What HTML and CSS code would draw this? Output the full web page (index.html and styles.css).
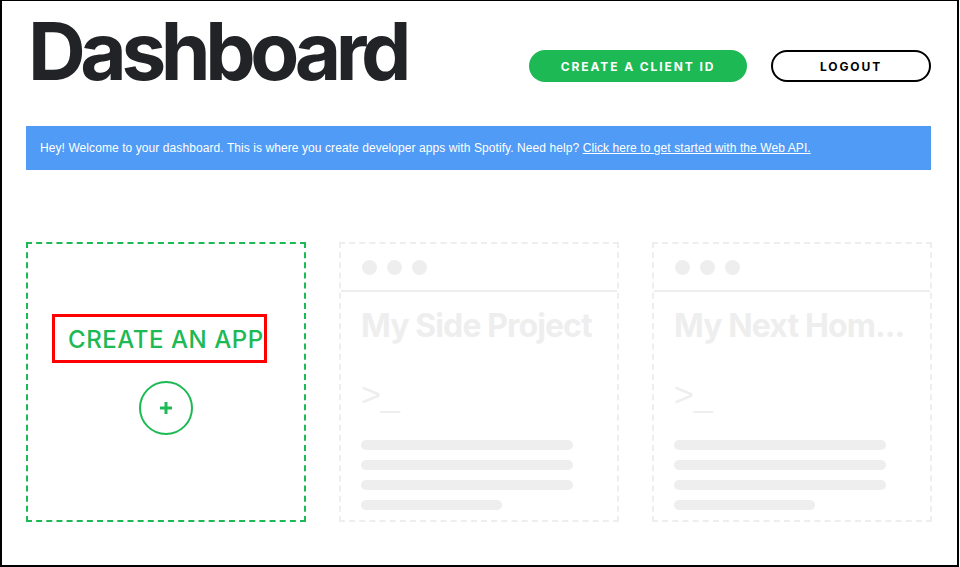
FILE: index.html
```html
<!DOCTYPE html>
<html lang="en">
<head>
<meta charset="utf-8">
<title>Dashboard</title>
<link rel="stylesheet" href="styles.css">
</head>
<body>
<div class="frame">
  <div class="container">
    <header class="header">
      <h1 class="title">Dashboard</h1>
      <div class="actions">
        <a class="btn btn-green" href="#">Create a client id</a>
        <a class="btn btn-outline" href="#">Logout</a>
      </div>
    </header>

    <div class="banner">
      Hey! Welcome to your dashboard. This is where you create developer apps with Spotify. Need help? <a href="#" class="banner-link">Click here to get started with the Web API.</a>
    </div>

    <div class="cards">
      <div class="card card-create">
        <h2 class="create-title">CREATE AN APP</h2>
        <div class="plus-circle">
          <svg width="14" height="14" viewBox="0 0 14 14"><path d="M7 1v12M1 7h12" stroke="#1db954" stroke-width="3" fill="none"/></svg>
        </div>
      </div>

      <div class="card card-ghost">
        <div class="ghost-bar">
          <span class="dot"></span><span class="dot"></span><span class="dot"></span>
        </div>
        <div class="ghost-body">
          <div class="ghost-title">My Side Project</div>
          <div class="ghost-prompt">&gt;_</div>
          <div class="ghost-lines">
            <span class="line"></span>
            <span class="line"></span>
            <span class="line"></span>
            <span class="line line-short"></span>
          </div>
        </div>
      </div>

      <div class="card card-ghost">
        <div class="ghost-bar">
          <span class="dot"></span><span class="dot"></span><span class="dot"></span>
        </div>
        <div class="ghost-body">
          <div class="ghost-title">My Next Hom...</div>
          <div class="ghost-prompt">&gt;_</div>
          <div class="ghost-lines">
            <span class="line"></span>
            <span class="line"></span>
            <span class="line"></span>
            <span class="line line-short"></span>
          </div>
        </div>
      </div>
    </div>
  </div>
</div>
</body>
</html>
```

FILE: styles.css
```css
* { box-sizing: border-box; }

html, body {
  margin: 0;
  padding: 0;
  background: #ffffff;
}

.frame {
  width: 959px;
  height: 567px;
  border-top: 1px solid #000;
  border-left: 2px solid #000;
  border-right: 2px solid #000;
  border-bottom: 2px solid #000;
  overflow: hidden;
  font-family: Inter, "Liberation Sans", sans-serif;
}

.container {
  margin-left: 24px;
  width: 906px;
  padding-top: 10px;
}

.header {
  display: flex;
  justify-content: space-between;
  align-items: flex-start;
}

.title {
  margin: 0 0 0 2px;
  font-family: Inter, sans-serif;
  font-weight: 700;
  font-size: 80px;
  line-height: 80px;
  letter-spacing: -5.4px;
  color: #222326;
}

.actions {
  display: flex;
  gap: 24px;
  margin-top: 39px;
  margin-right: 1px;
}

.btn {
  display: flex;
  align-items: center;
  justify-content: center;
  height: 32px;
  border-radius: 16px;
  text-decoration: none;
  text-transform: uppercase;
  font-family: Inter, sans-serif;
  font-weight: 700;
  font-size: 12px;
  letter-spacing: 1.9px;
}

.btn-green {
  width: 218px;
  background: #1db954;
  color: #fff;
}

.btn-outline {
  width: 160px;
  border: 2px solid #000;
  color: #000;
}

.banner {
  margin-top: 35px;
  height: 44px;
  width: 905px;
  background: #509bf5;
  color: #fff;
  font-family: "Liberation Sans", sans-serif;
  font-size: 12px;
  letter-spacing: 0.08px;
  line-height: 44px;
  padding-left: 14px;
  white-space: nowrap;
}

.banner-link {
  color: #fff;
  text-decoration: underline;
}

.cards {
  margin-top: 72px;
  display: grid;
  grid-template-columns: repeat(3, 280px);
  column-gap: 33px;
}

.card {
  height: 280px;
  border: 2px dashed #eeeeee;
}

.card-create {
  border-color: #1db954;
  display: flex;
  flex-direction: column;
  align-items: center;
  padding-top: 70px;
}

.create-title {
  margin: 0 0 0 -13px;
  width: 215px;
  height: 49px;
  border: 3px solid #ff0000;
  padding-left: 13px;
  padding-top: 2px;
  display: flex;
  align-items: center;
  font-family: Inter, sans-serif;
  font-weight: 500;
  font-size: 24px;
  letter-spacing: 0.55px;
  color: #1db954;
  white-space: nowrap;
}

.plus-circle {
  margin-top: 18px;
  width: 54px;
  height: 54px;
  border: 2px solid #1db954;
  border-radius: 50%;
  display: flex;
  align-items: center;
  justify-content: center;
}

.ghost-bar {
  height: 48px;
  border-bottom: 2px solid #eeeeee;
  display: flex;
  align-items: center;
  gap: 10px;
  padding-left: 21px;
}

.dot {
  width: 15px;
  height: 15px;
  border-radius: 50%;
  background: #eeeeee;
}

.ghost-body {
  padding-left: 20px;
}

.ghost-title {
  margin-top: 14px;
  font-family: Inter, sans-serif;
  font-weight: 700;
  font-size: 32px;
  line-height: 40px;
  letter-spacing: -0.9px;
  color: #eeeeee;
  white-space: nowrap;
}

.ghost-prompt {
  margin-top: 30px;
  font-family: "Liberation Sans", sans-serif;
  font-size: 34px;
  line-height: 36px;
  color: #eeeeee;
}

.ghost-lines {
  margin-top: 28px;
  display: flex;
  flex-direction: column;
  gap: 10px;
}

.line {
  display: block;
  width: 212px;
  height: 10px;
  border-radius: 5px;
  background: #eeeeee;
}

.line-short {
  width: 141px;
}
```
